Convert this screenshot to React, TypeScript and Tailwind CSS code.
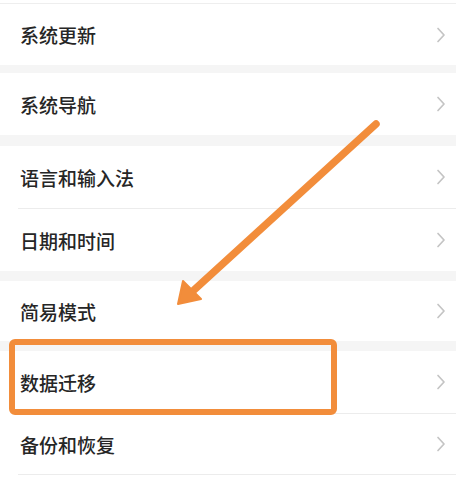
import React from "react";

type Item = { label: string; h: string };

function Chevron() {
  return (
    <svg width="10" height="16" viewBox="0 0 10 16" className="shrink-0">
      <path d="M2 1.5 L8 8 L2 14.5" fill="none" stroke="#c4c4c4" strokeWidth="1.7" strokeLinecap="round" strokeLinejoin="round" />
    </svg>
  );
}

function Row({ label, h }: Item) {
  return (
    <div className={`flex items-center justify-between bg-white pl-[20px] pr-[10px] ${h}`}>
      <span className="text-[19px] leading-none font-medium text-[#262626]">{label}</span>
      <Chevron />
    </div>
  );
}

function Band({ h }: { h: string }) {
  return <div className={`bg-[#f5f5f5] ${h}`} />;
}

function Divider() {
  return (
    <div className="h-px bg-white pl-[18px]">
      <div className="h-px bg-[#ececec]" />
    </div>
  );
}

export default function App() {
  return (
    <div
      className="relative w-[456px] h-[478px] overflow-hidden bg-white"
      style={{ fontFamily: '"Noto Sans CJK SC", "Noto Sans", sans-serif' }}
    >
      {/* settings list */}
      <div className="flex flex-col">
        <div className="h-[3px] bg-white" />
        <div className="h-px bg-[#eeeeee]" />
        <Row label="系统更新" h="h-[61px]" />
        <Band h="h-[8px]" />
        <Row label="系统导航" h="h-[62px]" />
        <Band h="h-[11px]" />
        <Row label="语言和输入法" h="h-[62px]" />
        <Divider />
        <Row label="日期和时间" h="h-[62px]" />
        <Band h="h-[10px]" />
        <Row label="简易模式" h="h-[60px]" />
        <Band h="h-[10px]" />
        <Row label="数据迁移" h="h-[62px]" />
        <Divider />
        <Row label="备份和恢复" h="h-[60px]" />
        <Divider />
      </div>

      {/* orange annotation */}
      <svg className="absolute inset-0 pointer-events-none" width="456" height="478" viewBox="0 0 456 478">
        <line x1="376" y1="124" x2="194" y2="290" stroke="#f28d3b" strokeWidth="7.5" strokeLinecap="round" />
        <polygon points="178,304 183,281 201,299" fill="#f28d3b" stroke="#f28d3b" strokeWidth="2" strokeLinejoin="round" />
        <rect x="12" y="342" width="322" height="70" rx="3" fill="none" stroke="#f28d3b" strokeWidth="6" />
      </svg>
    </div>
  );
}
